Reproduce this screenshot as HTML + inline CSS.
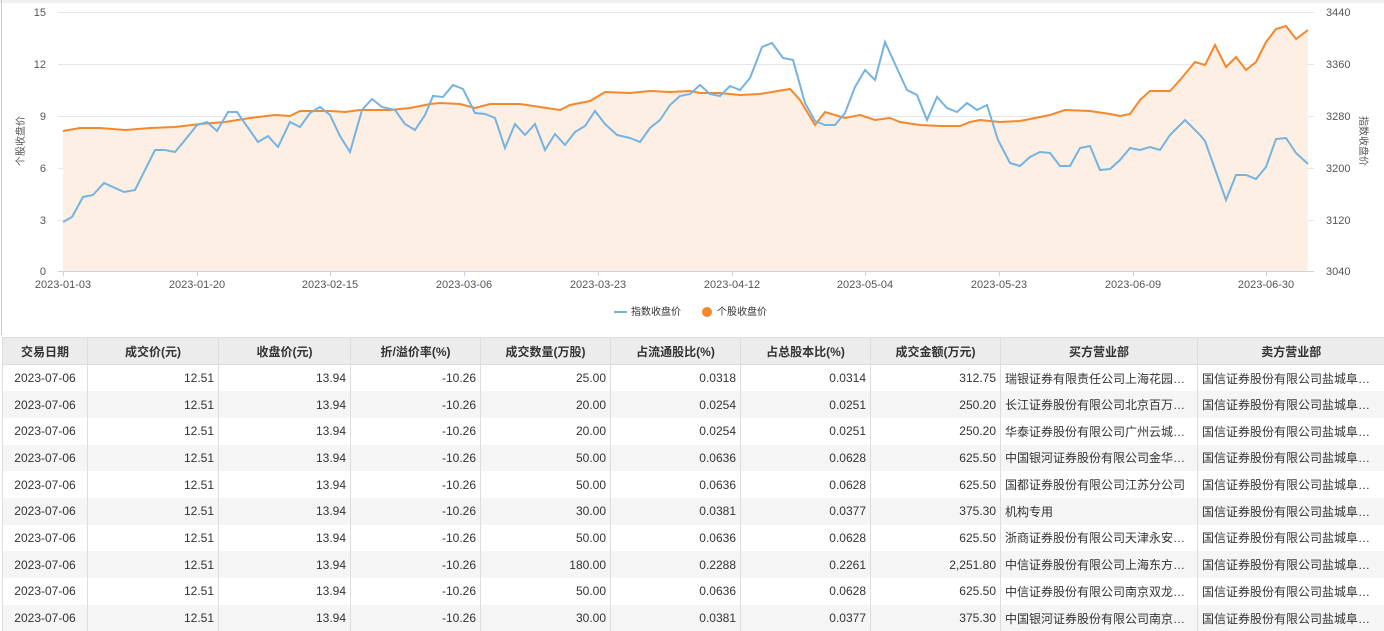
<!DOCTYPE html>
<html><head><meta charset="utf-8"><style>
body{margin:0;width:1384px;height:629px;overflow:hidden;background:#fff;font-family:"Liberation Sans","Noto Sans CJK SC",sans-serif;position:relative}
svg{position:absolute;left:0;top:0}
table{position:absolute;left:2px;top:337px;border-collapse:collapse;table-layout:fixed;font-size:12px;color:#333;width:1382px}
td,th{height:26.7px;padding:0 4px;border-left:1px solid #ddd;white-space:nowrap;overflow:hidden;text-overflow:ellipsis;box-sizing:border-box}
th{background:#ececec;font-weight:bold;color:#333;height:27px;border-bottom:1px solid #ddd;border-top:1px solid #ddd}
td{text-align:right}
td:first-child{text-align:center}
td.l{text-align:left}
tr:nth-child(odd) td{background:#f5f5f5}
</style></head><body>
<svg width="1384" height="335" font-family="Liberation Sans, Noto Sans CJK SC, sans-serif">
<rect x="0" y="0" width="1384" height="3" fill="#f0f0f0"/>
<rect x="1" y="0" width="1" height="335" fill="#ccc"/>
<g stroke="#e6e6e6" stroke-width="1">
<line x1="58" x2="1314" y1="12.5" y2="12.5"/><line x1="58" x2="1314" y1="64.5" y2="64.5"/><line x1="58" x2="1314" y1="116.5" y2="116.5"/><line x1="58" x2="1314" y1="168.5" y2="168.5"/><line x1="58" x2="1314" y1="220.5" y2="220.5"/>
</g>
<polygon fill="#fdeee3" opacity="0.95" points="63,271 63,131 80,128 100,128 125,130 150,128 175,127 200,124 225,122 250,118 275,115 290,116 300,111 330,111 345,112 360,110 390,110 410,108 430,104 440,103 460,104 475,108 490,104 520,104 540,107 560,110 570,105 590,101 605,92 630,93 650,91 670,92 690,91 700,93 720,93 740,95 760,94 790,89 800,100 815,125 825,112 845,118 860,115 875,120 890,118 900,122 920,125 940,126 960,126 970,122 980,120 1000,122 1020,121 1050,115 1065,110 1090,111 1110,114 1120,116 1130,114 1140,100 1150,91 1170,91 1180,80 1195,62 1205,65 1215,45 1226,67 1236,57 1246,70 1256,62 1266,42 1276,29 1286,26 1296,39 1308,30 1308,271"/>
<line x1="58" x2="1314" y1="271.5" y2="271.5" stroke="#c8d4e8"/>
<g stroke="#c8d4e8"><line x1="63.5" x2="63.5" y1="271" y2="276"/><line x1="197.5" x2="197.5" y1="271" y2="276"/><line x1="330.5" x2="330.5" y1="271" y2="276"/><line x1="464.5" x2="464.5" y1="271" y2="276"/><line x1="598.5" x2="598.5" y1="271" y2="276"/><line x1="732.5" x2="732.5" y1="271" y2="276"/><line x1="865.5" x2="865.5" y1="271" y2="276"/><line x1="999.5" x2="999.5" y1="271" y2="276"/><line x1="1133.5" x2="1133.5" y1="271" y2="276"/><line x1="1266.5" x2="1266.5" y1="271" y2="276"/></g>
<polyline fill="none" stroke="#f5872c" stroke-width="2" points="63,131 80,128 100,128 125,130 150,128 175,127 200,124 225,122 250,118 275,115 290,116 300,111 330,111 345,112 360,110 390,110 410,108 430,104 440,103 460,104 475,108 490,104 520,104 540,107 560,110 570,105 590,101 605,92 630,93 650,91 670,92 690,91 700,93 720,93 740,95 760,94 790,89 800,100 815,125 825,112 845,118 860,115 875,120 890,118 900,122 920,125 940,126 960,126 970,122 980,120 1000,122 1020,121 1050,115 1065,110 1090,111 1110,114 1120,116 1130,114 1140,100 1150,91 1170,91 1180,80 1195,62 1205,65 1215,45 1226,67 1236,57 1246,70 1256,62 1266,42 1276,29 1286,26 1296,39 1308,30"/>
<polyline fill="none" stroke="#75b3e0" stroke-width="2" points="63,222 72,217 83,197 93,195 104,183 124,192 135,190 155,150 165,150 175,152 185,140 197,125 207,122 217,131 228,112 237,112 258,142 268,136 278,147 290,122 300,127 310,113 320,107 330,115 340,136 350,152 362,110 372,99 382,107 395,110 405,124 415,130 425,115 433,96 443,97 453,85 463,89 475,113 485,114 495,118 505,148 515,124 525,135 535,124 545,150 555,134 565,145 575,132 585,126 595,111 605,124 617,135 630,138 640,142 650,128 660,120 670,105 680,96 690,94 700,85 710,94 720,96 730,86 740,90 750,78 762,47 772,43 783,58 793,60 805,103 815,121 825,125 835,125 845,113 855,87 865,70 875,80 885,42 895,64 907,90 917,95 927,120 937,97 947,108 957,112 967,103 977,110 987,105 998,140 1010,163 1020,166 1030,157 1040,152 1050,153 1060,166 1070,166 1080,148 1090,146 1100,170 1110,169 1120,160 1130,148 1140,150 1150,147 1160,150 1170,135 1185,120 1200,135 1205,141 1226,200 1236,175 1246,175 1256,179 1266,167 1276,139 1286,138 1296,153 1308,164"/>
<g font-size="11" fill="#555" text-anchor="end">
<text x="46" y="16">15</text><text x="46" y="68">12</text><text x="46" y="120">9</text><text x="46" y="172">6</text><text x="46" y="224">3</text><text x="46" y="275">0</text>
</g>
<g font-size="11" fill="#555">
<text x="1326" y="16">3440</text><text x="1326" y="68">3360</text><text x="1326" y="120">3280</text><text x="1326" y="172">3200</text><text x="1326" y="224">3120</text><text x="1326" y="275">3040</text>
</g>
<g font-size="11" fill="#555" text-anchor="middle">
<text x="63" y="288">2023-01-03</text><text x="197" y="288">2023-01-20</text><text x="330" y="288">2023-02-15</text><text x="464" y="288">2023-03-06</text><text x="598" y="288">2023-03-23</text><text x="732" y="288">2023-04-12</text><text x="865" y="288">2023-05-04</text><text x="999" y="288">2023-05-23</text><text x="1133" y="288">2023-06-09</text><text x="1266" y="288">2023-06-30</text>
</g>
<text font-size="10" fill="#555" text-anchor="middle" transform="translate(24,141) rotate(-90)">个股收盘价</text>
<text font-size="10" fill="#555" text-anchor="middle" transform="translate(1360,141) rotate(90)">指数收盘价</text>
<line x1="614" x2="627" y1="312" y2="312" stroke="#75b3e0" stroke-width="2"/>
<text x="631" y="315" font-size="10" fill="#333">指数收盘价</text>
<circle cx="707" cy="312" r="5" fill="#f5872c"/>
<text x="717" y="315" font-size="10" fill="#333">个股收盘价</text>
</svg>
<table>
<colgroup><col style="width:85px"><col style="width:131px"><col style="width:132px"><col style="width:130px"><col style="width:130px"><col style="width:130px"><col style="width:130px"><col style="width:130px"><col style="width:197px"><col style="width:187px"></colgroup>
<tr><th>交易日期</th><th>成交价(元)</th><th>收盘价(元)</th><th>折/溢价率(%)</th><th>成交数量(万股)</th><th>占流通股比(%)</th><th>占总股本比(%)</th><th>成交金额(万元)</th><th>买方营业部</th><th>卖方营业部</th></tr>
<tr><td>2023-07-06</td><td>12.51</td><td>13.94</td><td>-10.26</td><td>25.00</td><td>0.0318</td><td>0.0314</td><td>312.75</td><td class="l">瑞银证券有限责任公司上海花园石…</td><td class="l">国信证券股份有限公司盐城阜宁…</td></tr>
<tr><td>2023-07-06</td><td>12.51</td><td>13.94</td><td>-10.26</td><td>20.00</td><td>0.0254</td><td>0.0251</td><td>250.20</td><td class="l">长江证券股份有限公司北京百万庄…</td><td class="l">国信证券股份有限公司盐城阜宁…</td></tr>
<tr><td>2023-07-06</td><td>12.51</td><td>13.94</td><td>-10.26</td><td>20.00</td><td>0.0254</td><td>0.0251</td><td>250.20</td><td class="l">华泰证券股份有限公司广州云城西…</td><td class="l">国信证券股份有限公司盐城阜宁…</td></tr>
<tr><td>2023-07-06</td><td>12.51</td><td>13.94</td><td>-10.26</td><td>50.00</td><td>0.0636</td><td>0.0628</td><td>625.50</td><td class="l">中国银河证券股份有限公司金华证…</td><td class="l">国信证券股份有限公司盐城阜宁…</td></tr>
<tr><td>2023-07-06</td><td>12.51</td><td>13.94</td><td>-10.26</td><td>50.00</td><td>0.0636</td><td>0.0628</td><td>625.50</td><td class="l">国都证券股份有限公司江苏分公司</td><td class="l">国信证券股份有限公司盐城阜宁…</td></tr>
<tr><td>2023-07-06</td><td>12.51</td><td>13.94</td><td>-10.26</td><td>30.00</td><td>0.0381</td><td>0.0377</td><td>375.30</td><td class="l">机构专用</td><td class="l">国信证券股份有限公司盐城阜宁…</td></tr>
<tr><td>2023-07-06</td><td>12.51</td><td>13.94</td><td>-10.26</td><td>50.00</td><td>0.0636</td><td>0.0628</td><td>625.50</td><td class="l">浙商证券股份有限公司天津永安道…</td><td class="l">国信证券股份有限公司盐城阜宁…</td></tr>
<tr><td>2023-07-06</td><td>12.51</td><td>13.94</td><td>-10.26</td><td>180.00</td><td>0.2288</td><td>0.2261</td><td>2,251.80</td><td class="l">中信证券股份有限公司上海东方路…</td><td class="l">国信证券股份有限公司盐城阜宁…</td></tr>
<tr><td>2023-07-06</td><td>12.51</td><td>13.94</td><td>-10.26</td><td>50.00</td><td>0.0636</td><td>0.0628</td><td>625.50</td><td class="l">中信证券股份有限公司南京双龙大…</td><td class="l">国信证券股份有限公司盐城阜宁…</td></tr>
<tr><td>2023-07-06</td><td>12.51</td><td>13.94</td><td>-10.26</td><td>30.00</td><td>0.0381</td><td>0.0377</td><td>375.30</td><td class="l">中国银河证券股份有限公司南京洪…</td><td class="l">国信证券股份有限公司盐城阜宁…</td></tr>
</table>
</body></html>
